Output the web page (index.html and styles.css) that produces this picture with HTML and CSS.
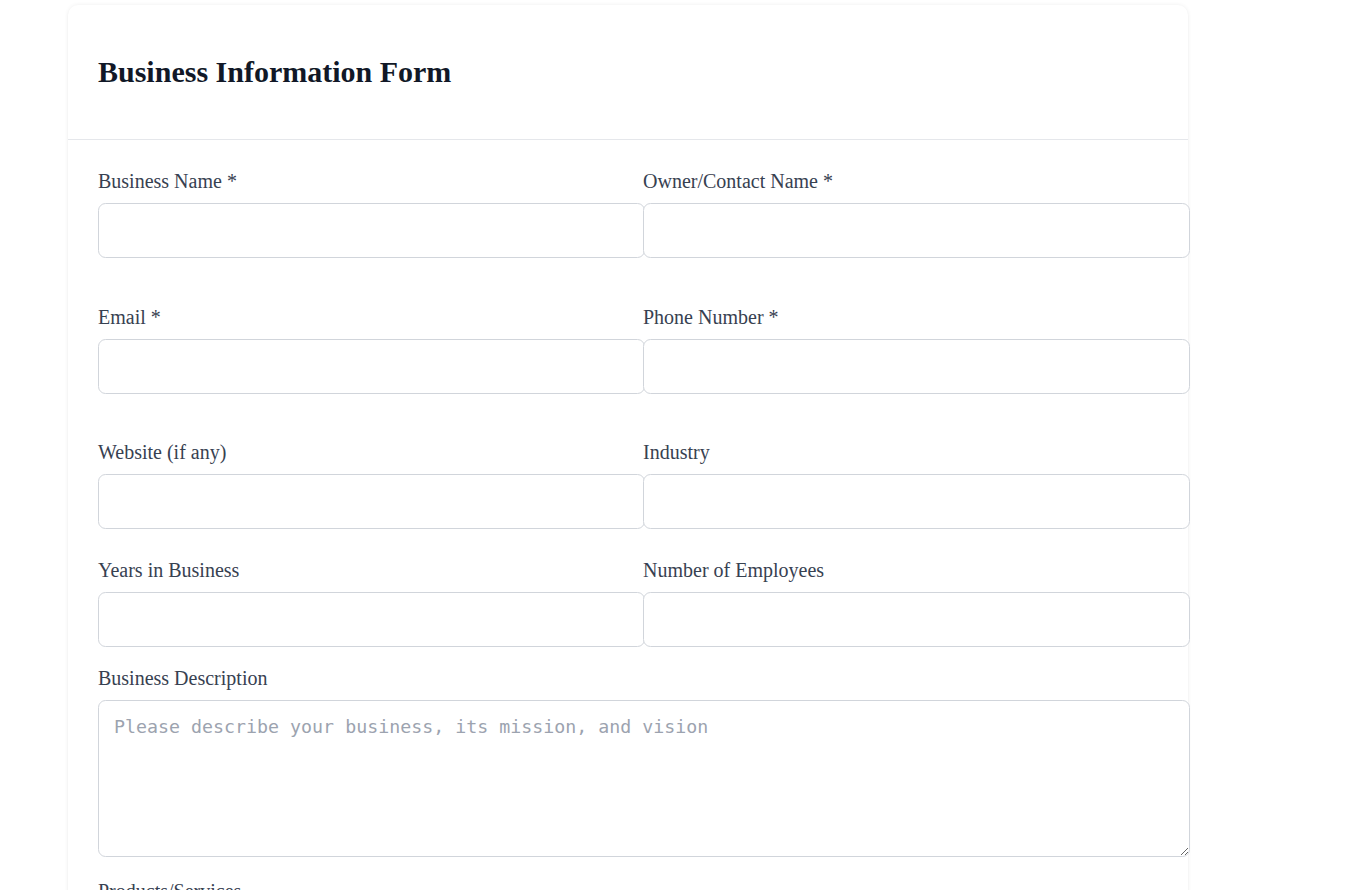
FILE: index.html
```html
<!DOCTYPE html>
<html lang="en">
<head>
<meta charset="utf-8">
<title>Business Information Form</title>
<link rel="stylesheet" href="styles.css">
</head>
<body>
<div class="page">
  <div class="card">
    <div class="card-header">
      <h2 class="title">Business Information Form</h2>
    </div>
    <form class="card-body">
      <div class="row row-a">
        <div class="field">
          <label class="label">Business Name *</label>
          <input class="input" type="text">
        </div>
        <div class="field">
          <label class="label">Owner/Contact Name *</label>
          <input class="input" type="text">
        </div>
      </div>
      <div class="row row-b">
        <div class="field">
          <label class="label">Email *</label>
          <input class="input" type="email">
        </div>
        <div class="field">
          <label class="label">Phone Number *</label>
          <input class="input" type="tel">
        </div>
      </div>
      <div class="row row-c">
        <div class="field">
          <label class="label">Website (if any)</label>
          <input class="input" type="text">
        </div>
        <div class="field">
          <label class="label">Industry</label>
          <input class="input" type="text">
        </div>
      </div>
      <div class="row row-d">
        <div class="field">
          <label class="label">Years in Business</label>
          <input class="input" type="text">
        </div>
        <div class="field">
          <label class="label">Number of Employees</label>
          <input class="input" type="text">
        </div>
      </div>
      <div class="field field-wide">
        <label class="label">Business Description</label>
        <textarea class="textarea" placeholder="Please describe your business, its mission, and vision"></textarea>
      </div>
      <div class="field field-wide">
        <label class="label">Products/Services</label>
        <textarea class="textarea" placeholder="Describe your main products or services"></textarea>
      </div>
    </form>
  </div>
</div>
</body>
</html>
```

FILE: styles.css
```css
html, body {
  margin: 0;
  padding: 0;
  background: #ffffff;
}

.page {
  padding: 5px 0 40px 68px;
  font-family: "Liberation Serif", "Times New Roman", serif;
}

.card {
  width: 1120px;
  background: #ffffff;
  border-radius: 10px;
  box-shadow: 0 0 4px rgba(0, 0, 0, 0.07), 0 1px 2px rgba(0, 0, 0, 0.03);
}

.card-header {
  padding: 49px 30px;
  border-bottom: 1px solid #e5e7eb;
}

.title {
  margin: 0;
  font-size: 30px;
  line-height: 36px;
  font-weight: 700;
  color: #111827;
}

.card-body {
  padding: 30px 30px 30px;
}

.row {
  display: grid;
  grid-template-columns: 1fr 1fr;
  column-gap: 30px;
}

.row-a { margin-bottom: 48px; }
.row-b { margin-bottom: 47px; }
.row-c { margin-bottom: 30px; }
.row-d { margin-bottom: 20px; }

.field {
  display: flex;
  flex-direction: column;
  min-width: 0;
}

.field-wide {
  margin-bottom: 23px;
}

.label {
  display: block;
  font-size: 20px;
  line-height: 23px;
  color: #374151;
  margin-bottom: 10px;
}

.input {
  box-sizing: content-box;
  width: 100%;
  height: 23px;
  padding: 15px;
  margin: 0;
  border: 1px solid #d1d5db;
  border-radius: 7.5px;
  background: #ffffff;
  font-family: "Liberation Sans", Arial, sans-serif;
  font-size: 18px;
  outline: none;
}

.textarea {
  box-sizing: content-box;
  width: 100%;
  height: 125px;
  padding: 15px;
  margin: 0;
  border: 1px solid #d1d5db;
  border-radius: 7.5px;
  background: #ffffff;
  font-family: "DejaVu Sans Mono", "Liberation Mono", monospace;
  font-size: 18.3px;
  line-height: 22px;
  color: #111827;
  outline: none;
}

.textarea::placeholder {
  color: #9ca3af;
}
```
